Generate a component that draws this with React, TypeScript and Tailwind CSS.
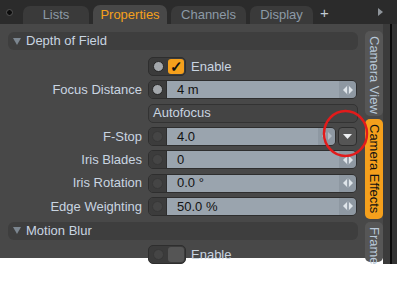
import React from "react";

const label = "text-[#c9d5e1]";

function Dot({ on }: { on?: boolean }) {
  return (
    <div
      className={`w-[11px] h-[11px] rounded-full border ${
        on ? "bg-[#a3a7ab] border-[#262626]" : "bg-[#454545] border-[#383838]"
      }`}
    />
  );
}

function Arrows({ dim }: { dim?: boolean }) {
  return (
    <svg width="12" height="10" viewBox="0 0 12 10">
      <polygon points="5,1 5,9 1,5" fill={dim ? "#b4bcc4" : "#dfe5ea"} />
      <polygon points="7,1 7,9 11,5" fill={dim ? "#b4bcc4" : "#dfe5ea"} />
      <rect x="5.6" y="0" width="0.8" height="10" fill={dim ? "#8f99a3" : "#a9b2bb"} />
    </svg>
  );
}

function Toggle({ checked }: { checked?: boolean }) {
  return (
    <div className="flex items-center h-[19px]">
      <div className="w-[134px]" />
      <div className="ml-[6px] flex h-[19px] w-[38px] rounded-[5px] border border-[#2e2e2e] bg-[#3b3b3b] overflow-hidden">
        <div className="w-[18px] flex items-center justify-center">
          <Dot on={checked} />
        </div>
        {checked ? (
          <div className="flex-1 m-[1px] rounded-[3px] bg-[#f5a01c] flex items-center justify-center text-[#111] text-[15px] font-bold leading-none">
            ✓
          </div>
        ) : (
          <div className="flex-1 m-[1px] rounded-[3px] bg-[#555555]" />
        )}
      </div>
      <span className={`ml-[5px] text-[13px] ${label}`}>Enable</span>
    </div>
  );
}

function Field({
  name,
  value,
  on,
  dropdown,
}: {
  name: string;
  value: string;
  on?: boolean;
  dropdown?: boolean;
}) {
  return (
    <div className="flex items-center h-[19px]">
      <div className={`w-[134px] text-right text-[13px] ${label}`}>{name}</div>
      <div className="ml-[6px] flex w-[209px] h-[19px] gap-[2px]">
        <div className="flex flex-1 rounded-[5px] border border-[#2e2e2e] overflow-hidden">
          <div className="w-[18px] bg-[#3c3c3c] flex items-center justify-center border-r border-[#2e2e2e]">
            <Dot on={on} />
          </div>
          <div className="flex-1 bg-[#9aa4ae] flex items-center pl-[10px] text-[13px] text-[#121212]">
            {value}
          </div>
          <div className="w-[17px] bg-[#8e98a2] flex items-center justify-center">
            <Arrows dim={dropdown} />
          </div>
        </div>
        {dropdown && (
          <div className="w-[19px] rounded-[4px] border border-[#2e2e2e] bg-[#555555] flex items-center justify-center">
            <svg width="9" height="5" viewBox="0 0 9 5">
              <polygon points="0,0 9,0 4.5,5" fill="#eef0f2" />
            </svg>
          </div>
        )}
      </div>
    </div>
  );
}

function Header({ title }: { title: string }) {
  return (
    <div className="h-[18px] w-[350px] rounded-[6px] bg-[#3e3e3e] flex items-center pl-[5px]">
      <svg width="8" height="7" viewBox="0 0 8 7">
        <polygon points="0,0 8,0 4,7" fill="#7c8690" />
      </svg>
      <span className={`ml-[5px] text-[13px] ${label}`}>{title}</span>
    </div>
  );
}

function SideTab({ text, active, h }: { text: string; active?: boolean; h: string }) {
  return (
    <div
      className={`w-[18px] ${h} rounded-[5px] flex items-start justify-center pt-[5px] ${
        active ? "bg-[#f5a01c] text-[#111]" : "bg-[#565656] text-[#b9c9d9]"
      }`}
    >
      <span className="[writing-mode:vertical-rl] text-[13px] leading-[18px]">{text}</span>
    </div>
  );
}

export default function App() {
  return (
    <div className="relative w-[397px] h-[285px] bg-white font-['Liberation_Sans',Arial,sans-serif] overflow-hidden">
      <div className="w-[397px] h-[258px] bg-[#484848] flex flex-col">
        {/* tab bar */}
        <div className="h-[24px] bg-[#2b2b2b] flex items-end">
          <div className="w-[23px] h-[24px] flex items-center justify-center pr-[5px]">
            <div className="w-[7px] h-[7px] rounded-full bg-[#0c0c0c] border border-[#555]" />
          </div>
          <div className="flex items-end gap-[4px]">
            <div className="w-[66px] h-[18px] rounded-t-[7px] bg-[#3a3a3a] text-[#8d9aa7] text-[13px] flex items-center justify-center">
              Lists
            </div>
            <div className="w-[74px] h-[19px] rounded-t-[7px] bg-[#484848] text-[#f5a01c] text-[13px] flex items-center justify-center">
              Properties
            </div>
            <div className="w-[75px] h-[18px] rounded-t-[7px] bg-[#3a3a3a] text-[#8d9aa7] text-[13px] flex items-center justify-center">
              Channels
            </div>
            <div className="w-[63px] h-[18px] rounded-t-[7px] bg-[#3a3a3a] text-[#8d9aa7] text-[13px] flex items-center justify-center">
              Display
            </div>
          </div>
          <div className="h-[24px] flex items-center ml-[7px] text-[#c3ccd4] text-[15px] leading-none">+</div>
          <div className="flex-1" />
          <div className="h-[24px] flex items-center pr-[14px]">
            <svg width="5" height="8" viewBox="0 0 5 8">
              <polygon points="0,0 5,4 0,8" fill="#8e949a" />
            </svg>
          </div>
        </div>

        <div className="flex flex-1">
          {/* properties */}
          <div className="w-[358px] pl-[8px] pt-[8px] flex flex-col">
            <Header title="Depth of Field" />
            <div className="mt-[7px] flex flex-col gap-[4.33px]">
              <Toggle checked />
              <Field name="Focus Distance" value="4 m" on />
              <div className="flex items-center h-[19px]">
                <div className="w-[134px]" />
                <div className={`ml-[6px] w-[210px] h-[19px] rounded-[5px] border border-[#333333] bg-[#444444] flex items-center pl-[4px] text-[13px] ${label}`}>
                  Autofocus
                </div>
              </div>
              <Field name="F-Stop" value="4.0" dropdown />
              <Field name="Iris Blades" value="0" />
              <Field name="Iris Rotation" value="0.0 °" />
              <Field name="Edge Weighting" value="50.0 %" />
            </div>
            <div className="mt-[6px]">
              <Header title="Motion Blur" />
            </div>
            <div className="mt-[5px]">
              <Toggle />
            </div>
          </div>

          {/* side tabs */}
          <div className="flex-1 flex">
            <div className="pl-[7px] pt-[7px] flex flex-col gap-[3px]">
              <SideTab text="Camera View" h="h-[85px]" />
              <SideTab text="Camera Effects" h="h-[100px]" active />
              <SideTab text="Frame" h="h-[40px]" />
            </div>
            <div className="w-[7px] bg-[#3b3b3b]" />
            <div className="w-[2px] bg-[#0a0a0a]" />
            <div className="flex-1 bg-[#333333]" />
          </div>
        </div>
      </div>

      {/* annotation */}
      <svg className="absolute left-[321px] top-[108px]" width="50" height="52" viewBox="0 0 50 52">
        <ellipse cx="24.5" cy="25.5" rx="21.5" ry="22.5" fill="none" stroke="#e21b1b" strokeWidth="2.5" />
      </svg>
    </div>
  );
}
